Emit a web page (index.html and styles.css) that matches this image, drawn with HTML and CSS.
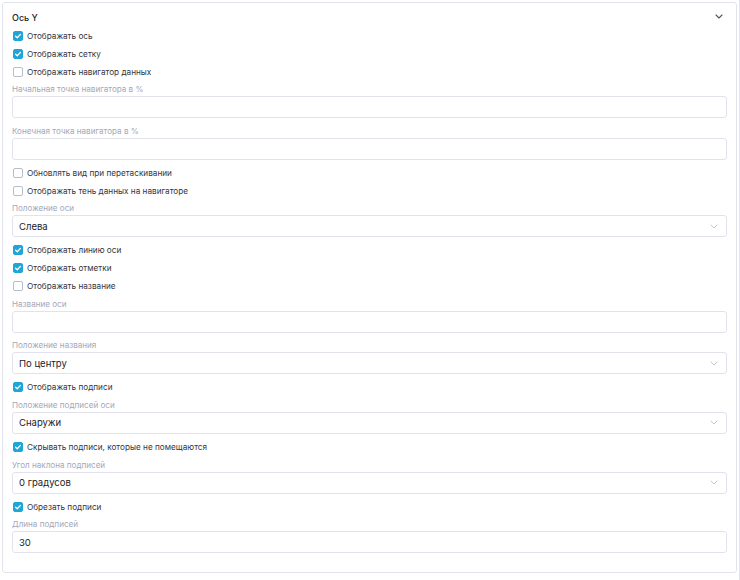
FILE: index.html
```html
<!DOCTYPE html>
<html lang="ru">
<head>
<meta charset="utf-8">
<link rel="stylesheet" href="styles.css">
</head>
<body>
<div class="frame">
  <section class="panel">
    <header class="panel-head">
      <span class="panel-title">Ось Y</span>
      <svg class="head-chevron" width="8" height="5" viewBox="0 0 8 5"><path d="M1 1 L4 4 L7 1" fill="none" stroke="#555" stroke-width="1.1" stroke-linecap="round" stroke-linejoin="round"/></svg>
    </header>
    <div class="panel-body">
      <label class="check"><span class="box on"><svg viewBox="0 0 10 10"><path d="M2.6 5.2 L4.3 6.8 L7.4 3.4" fill="none" stroke="#fff" stroke-width="1.3" stroke-linecap="round" stroke-linejoin="round"/></svg></span>Отображать ось</label>
      <label class="check"><span class="box on"><svg viewBox="0 0 10 10"><path d="M2.6 5.2 L4.3 6.8 L7.4 3.4" fill="none" stroke="#fff" stroke-width="1.3" stroke-linecap="round" stroke-linejoin="round"/></svg></span>Отображать сетку</label>
      <label class="check"><span class="box"></span>Отображать навигатор данных</label>

      <div class="field-label">Начальная точка навигатора в %</div>
      <div class="input"></div>

      <div class="field-label">Конечная точка навигатора в %</div>
      <div class="input"></div>

      <label class="check"><span class="box"></span>Обновлять вид при перетаскивании</label>
      <label class="check"><span class="box"></span>Отображать тень данных на навигаторе</label>

      <div class="field-label">Положение оси</div>
      <div class="input select"><span>Слева</span><svg class="sel-chevron" width="8" height="5" viewBox="0 0 8 5"><path d="M1 1 L4 4 L7 1" fill="none" stroke="#c4c6d2" stroke-width="1" stroke-linecap="round" stroke-linejoin="round"/></svg></div>

      <label class="check"><span class="box on"><svg viewBox="0 0 10 10"><path d="M2.6 5.2 L4.3 6.8 L7.4 3.4" fill="none" stroke="#fff" stroke-width="1.3" stroke-linecap="round" stroke-linejoin="round"/></svg></span>Отображать линию оси</label>
      <label class="check"><span class="box on"><svg viewBox="0 0 10 10"><path d="M2.6 5.2 L4.3 6.8 L7.4 3.4" fill="none" stroke="#fff" stroke-width="1.3" stroke-linecap="round" stroke-linejoin="round"/></svg></span>Отображать отметки</label>
      <label class="check"><span class="box"></span>Отображать название</label>

      <div class="field-label">Название оси</div>
      <div class="input"></div>

      <div class="field-label">Положение названия</div>
      <div class="input select"><span>По центру</span><svg class="sel-chevron" width="8" height="5" viewBox="0 0 8 5"><path d="M1 1 L4 4 L7 1" fill="none" stroke="#c4c6d2" stroke-width="1" stroke-linecap="round" stroke-linejoin="round"/></svg></div>

      <label class="check"><span class="box on"><svg viewBox="0 0 10 10"><path d="M2.6 5.2 L4.3 6.8 L7.4 3.4" fill="none" stroke="#fff" stroke-width="1.3" stroke-linecap="round" stroke-linejoin="round"/></svg></span>Отображать подписи</label>

      <div class="field-label">Положение подписей оси</div>
      <div class="input select"><span>Снаружи</span><svg class="sel-chevron" width="8" height="5" viewBox="0 0 8 5"><path d="M1 1 L4 4 L7 1" fill="none" stroke="#c4c6d2" stroke-width="1" stroke-linecap="round" stroke-linejoin="round"/></svg></div>

      <label class="check"><span class="box on"><svg viewBox="0 0 10 10"><path d="M2.6 5.2 L4.3 6.8 L7.4 3.4" fill="none" stroke="#fff" stroke-width="1.3" stroke-linecap="round" stroke-linejoin="round"/></svg></span>Скрывать подписи, которые не помещаются</label>

      <div class="field-label">Угол наклона подписей</div>
      <div class="input select"><span>0 градусов</span><svg class="sel-chevron" width="8" height="5" viewBox="0 0 8 5"><path d="M1 1 L4 4 L7 1" fill="none" stroke="#c4c6d2" stroke-width="1" stroke-linecap="round" stroke-linejoin="round"/></svg></div>

      <label class="check"><span class="box on"><svg viewBox="0 0 10 10"><path d="M2.6 5.2 L4.3 6.8 L7.4 3.4" fill="none" stroke="#fff" stroke-width="1.3" stroke-linecap="round" stroke-linejoin="round"/></svg></span>Обрезать подписи</label>

      <div class="field-label">Длина подписей</div>
      <div class="input"><span>30</span></div>
    </div>
  </section>
</div>
</body>
</html>
```

FILE: styles.css
```css
html, body {
  margin: 0;
  padding: 0;
  background: #ffffff;
}

body {
  font-family: Inter, "Noto Sans", "Liberation Sans", sans-serif;
  color: #2b2b33;
  width: 740px;
  height: 580px;
  overflow: hidden;
}

.frame {
  display: flex;
  height: 580px;
  padding: 2px 0 0 2px;
  box-sizing: border-box;
  border-right: 1px solid #e3e3ee;
  width: 740px;
}

.panel {
  width: 735px;
  height: 571px;
  box-sizing: border-box;
  border: 1px solid #e3e3ee;
  border-radius: 3px;
  padding: 6px 9px 0 9px;
  display: flex;
  flex-direction: column;
}

.panel-head {
  display: flex;
  align-items: center;
  justify-content: space-between;
  height: 16px;
}

.panel-title {
  font-size: 9px;
  font-weight: 500;
  color: #222228;
}

.head-chevron {
  margin-right: 4px;
  margin-top: -1px;
}

.panel-body {
  display: flex;
  flex-direction: column;
}

.check {
  display: flex;
  align-items: center;
  height: 18px;
  box-sizing: border-box;
  padding-top: 3px;
  font-size: 8.2px;
  color: #35353d;
  padding-left: 1px;
}

.box {
  width: 10px;
  height: 10px;
  box-sizing: border-box;
  border: 1px solid #b9bccb;
  border-radius: 2px;
  margin-right: 4px;
  background: #fff;
  flex: none;
  display: flex;
}

.box.on {
  background: #1ea6d6;
  border-color: #1ea6d6;
}

.box svg {
  width: 10px;
  height: 10px;
  margin: -1px;
}

.field-label {
  margin-top: 3px;
  height: 14px;
  line-height: 14px;
  font-size: 8.1px;
  color: #a4a7ba;
}

.input {
  height: 22px;
  box-sizing: border-box;
  border: 1px solid #e2e2ee;
  border-radius: 3px;
  margin-bottom: 2.6px;
  display: flex;
  align-items: center;
  justify-content: space-between;
  padding: 0 8px 0 6px;
  font-size: 9.5px;
  color: #222228;
}

.sel-chevron {
  margin-right: 0;
}
```
